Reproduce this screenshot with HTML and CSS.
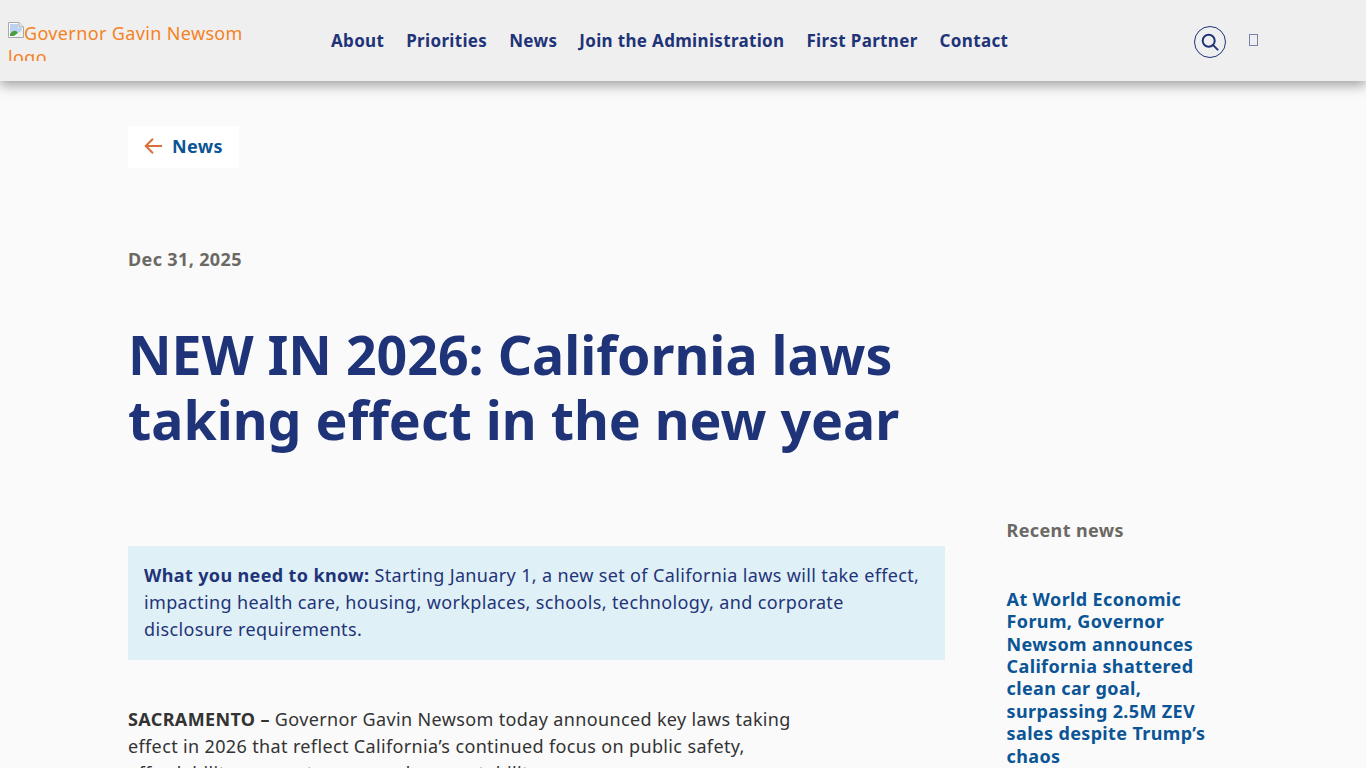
FILE: index.html
```html
<!DOCTYPE html>
<html lang="en">
<head>
    <meta charset="UTF-8">
    <meta name="viewport" content="width=device-width, initial-scale=1.0">
    <title>NEW IN 2026: California laws taking effect in the new year</title>
    <link rel="stylesheet" href="styles.css">
</head>
<body>
    <header class="site-header">
        <a class="logo" href="#">
            <svg class="broken-img" width="16" height="16" viewBox="0 0 16 16">
                <path d="M.5 .5H11L15.500 5V15.500H.5Z" fill="#fff" stroke="#a9a9a9"/>
                <path d="M11 .5V5H15.500" fill="#e8e8e8" stroke="#a9a9a9"/>
                <path d="M2 2H10V6H14V10L2 12Z" fill="#bcd2f3"/>
                <path d="M2 14V12C5 8 8 8 10 11L6 14Z" fill="#4d9e3f"/>
                <path d="M7 15L15 7V15Z" fill="#efefef"/>
            </svg>Governor Gavin Newsom logo
        </a>
        <nav class="main-nav">
            <a href="#">About</a>
            <a href="#">Priorities</a>
            <a href="#">News</a>
            <a href="#">Join the Administration</a>
            <a href="#">First Partner</a>
            <a href="#">Contact</a>
        </nav>
        <div class="header-tools">
            <button class="search-btn" aria-label="Search">
                <svg width="18" height="18" viewBox="0 0 18 18" fill="none" stroke="#1f3478" stroke-width="2">
                    <circle cx="7.7" cy="7.7" r="6"/>
                    <path d="M12.100 12.100L16.600 16.600" stroke-linecap="round"/>
                </svg>
            </button>
            <span class="missing-glyph"></span>
        </div>
    </header>

    <main class="page">
        <a class="back-link" href="#">
            <svg class="back-arrow" width="18" height="16" viewBox="0 0 18 16" fill="none" stroke="#d9703a" stroke-width="2">
                <path d="M18 8H1.500M9 .8L1.700 8L9 15.200"/>
            </svg>
            <span class="back-label">News</span>
        </a>
        <div class="post-date">Dec 31, 2025</div>
        <h1>NEW IN 2026: California laws taking effect in the new year</h1>

        <div class="columns">
            <article class="post-body">
                <div class="callout">
                    <strong>What you need to know:</strong> Starting January 1, a new set of California laws will take effect, impacting health care, housing, workplaces, schools, technology, and corporate disclosure requirements.
                </div>
                <p><strong>SACRAMENTO –</strong> Governor Gavin Newsom today announced key laws taking effect in 2026 that reflect California’s continued focus on public safety, affordability, access to care, and accountability.</p>
            </article>
            <aside class="sidebar">
                <h2>Recent news</h2>
                <a class="recent-link" href="#">At World Economic Forum, Governor Newsom announces California shattered clean car goal, surpassing 2.5M ZEV sales despite Trump’s chaos</a>
            </aside>
        </div>
    </main>
</body>
</html>
```

FILE: styles.css
```css
html { height: 768px; overflow: hidden; }
body { margin: 0; height: 768px; overflow: hidden; font-family: "Noto Sans", sans-serif; letter-spacing: 0.36px; background-color: #fafafa; color: #333; }
a { text-decoration: none; }

.site-header { height: 81px; display: flex; align-items: center; background-color: #efefef; box-shadow: 0 4px 12px rgba(0, 0, 0, 0.38); position: relative; }
.logo { width: 240px; height: 40px; margin: 0 0 0 8px; overflow: hidden; font-size: 18px; line-height: 24.500px; color: #f5821f; flex-shrink: 0; }
.broken-img { vertical-align: 2px; }
.main-nav { display: flex; gap: 22px; margin: 0 0 0 83px; }
.main-nav a { font-size: 17px; font-weight: 700; letter-spacing: 0.33px; color: #1f3478; }
.header-tools { display: flex; align-items: center; margin-left: auto; margin-right: 108px; }
.search-btn { width: 32px; height: 32px; padding: 0; margin-top: 3px; display: flex; align-items: center; justify-content: center; background: none; border: 1px solid #1f3478; border-radius: 50%; }
.missing-glyph { width: 7px; height: 10px; margin: 0 0 1px 23px; border: 1px solid #7a84a8; }

.page { padding: 45px 121px 0 128px; }
.back-link { display: inline-flex; align-items: center; gap: 10px; height: 42px; padding: 0 16px; background-color: #fff; font-size: 18px; font-weight: 700; color: #0b5596; }
.back-arrow { margin-top: -2px; }
.back-label { margin-top: -2px; }
.post-date { margin-top: 78px; font-size: 18px; font-weight: 700; line-height: 27px; color: #6b6964; }
h1 { margin: 49px 0 0; max-width: 817px; font-size: 53.650px; font-weight: 700; line-height: 65px; letter-spacing: 0; color: #1f3478; }

.columns { display: flex; gap: 61.600px; margin-top: 62px; }
.post-body { width: 817px; flex-shrink: 0; padding-top: 32px; }
.callout { padding: 16px 16px 17px; background-color: #dff0f7; font-size: 18px; line-height: 27px; color: #1f3478; }
.post-body p { margin: 46px 0 0; max-width: 680px; font-size: 18px; line-height: 27px; }
.sidebar { width: 210px; padding-top: 3px; }
.sidebar h2 { margin: 0; font-size: 18px; font-weight: 700; line-height: 27px; color: #6b6964; }
.recent-link { display: block; margin-top: 43.800px; font-size: 18px; font-weight: 700; line-height: 22.400px; color: #0b5596; }
```
